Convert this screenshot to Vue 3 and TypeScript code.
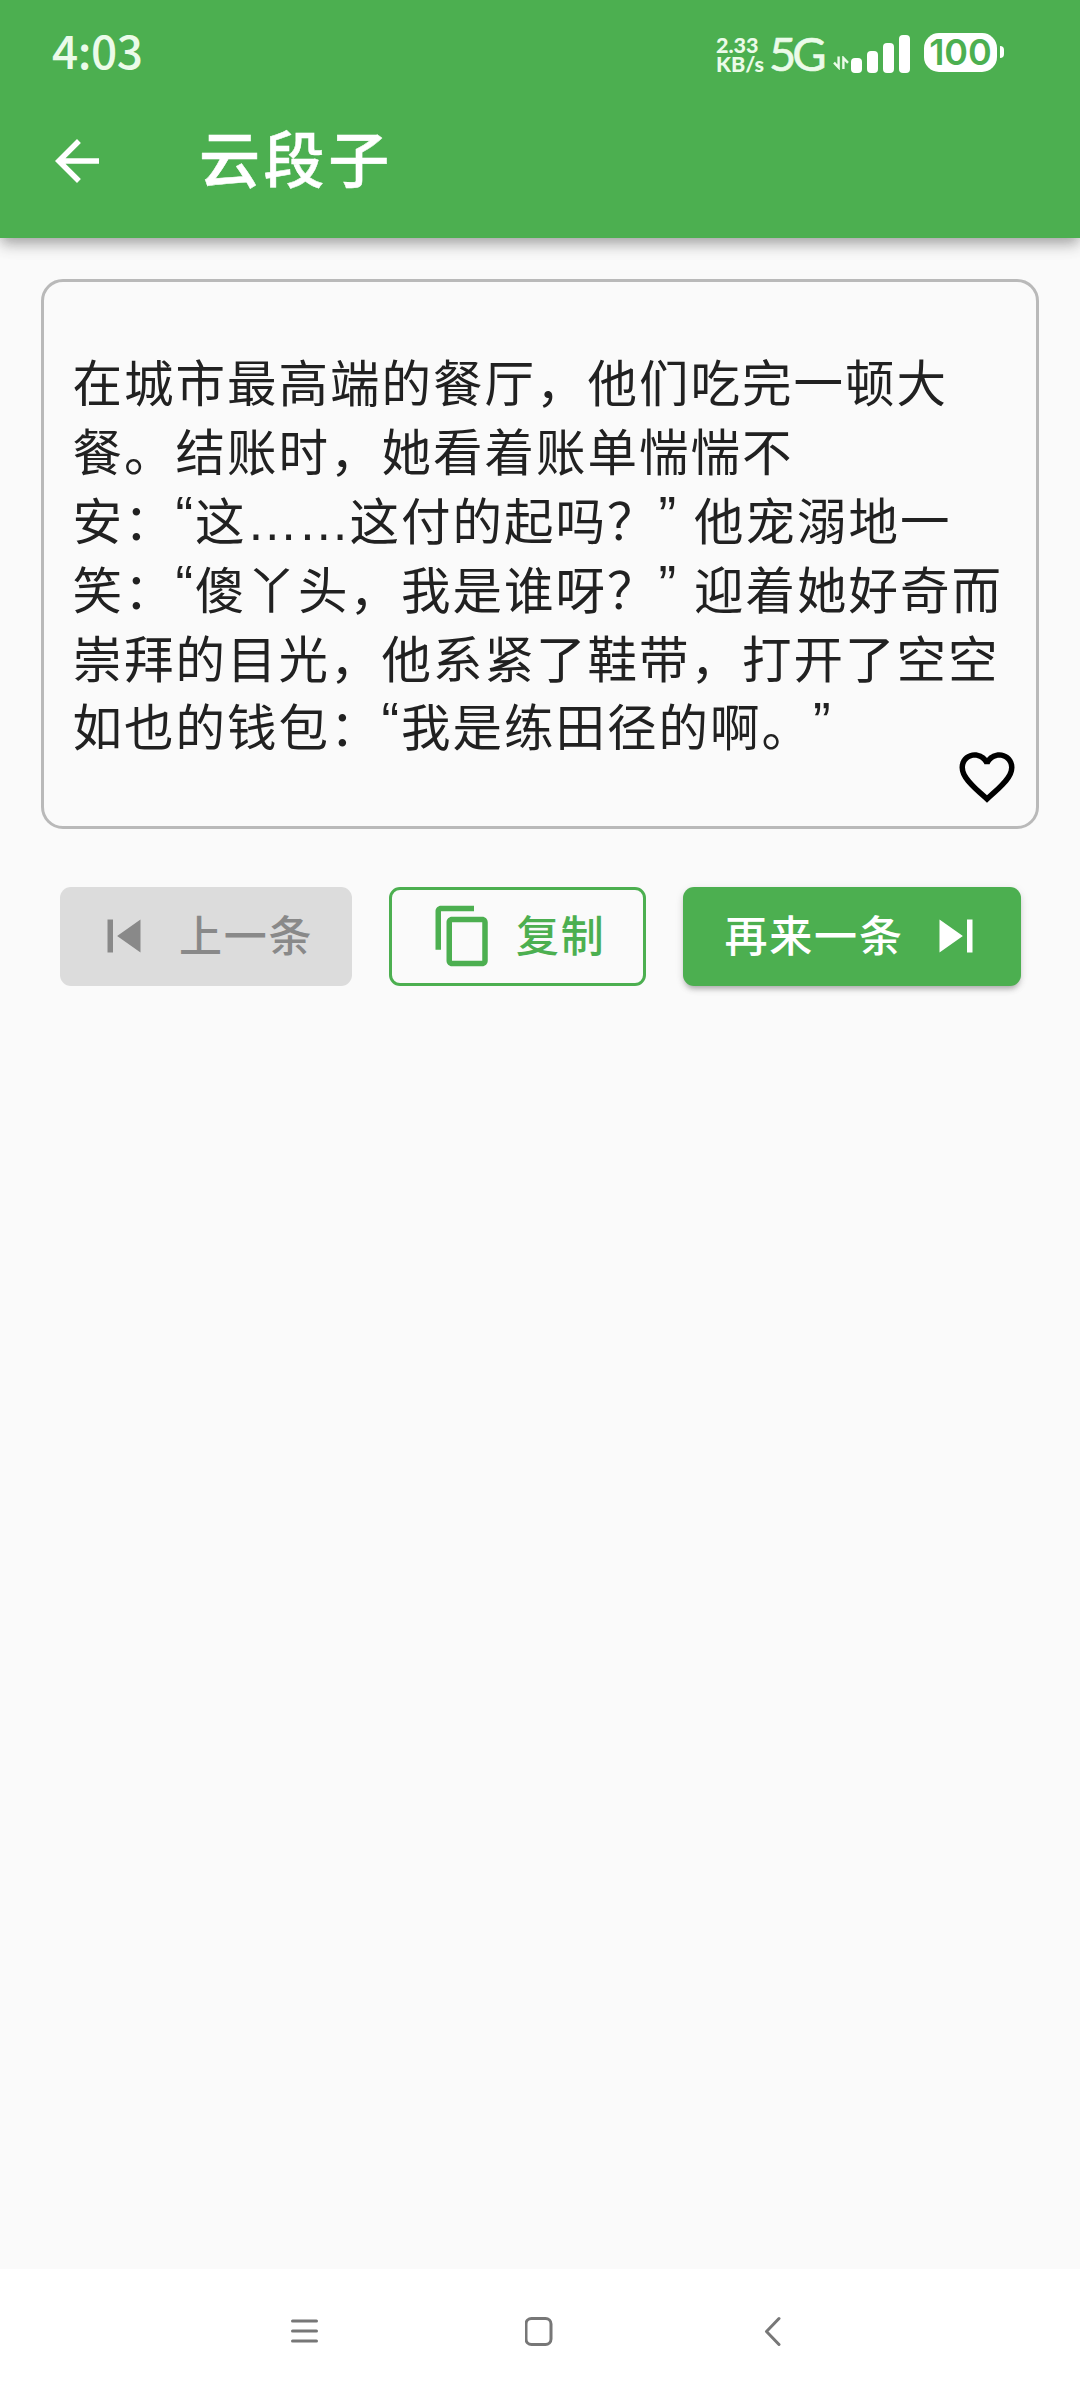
<script setup lang="ts">
interface Piece {
  text: string
  kind?: 'quote' | 'gap' | 'dots'
}

const title = '云段子'
const lines: string[] = [
  '在城市最高端的餐厅，他们吃完一顿大',
  '餐。结账时，她看着账单惴惴不',
  '安：“这……这付的起吗？” 他宠溺地一',
  '笑：“傻丫头，我是谁呀？” 迎着她好奇而',
  '崇拜的目光，他系紧了鞋带，打开了空空',
  '如也的钱包：“我是练田径的啊。”',
]

// Curly quotes, spaces and ellipses need their own advance widths.
function split(line: string): Piece[] {
  return line
    .split(/([“” ]|…+)/)
    .filter((part) => part.length > 0)
    .map((part) => {
      if (part === '“' || part === '”') return { text: part, kind: 'quote' as const }
      if (part === ' ') return { text: part, kind: 'gap' as const }
      if (part.startsWith('…')) return { text: part, kind: 'dots' as const }
      return { text: part }
    })
}

const joke: Piece[][] = lines.map(split)
const signal: number[] = [15, 22, 30, 38]
</script>

<template>
  <div class="screen">
    <header class="top">
      <div class="status">
        <span class="clock">4:03</span>
        <div class="indicators">
          <div class="speed"><span>2.33</span><span>KB/s</span></div>
          <span class="net">5G</span>
          <svg class="traffic" width="16" height="14" viewBox="0 0 16 14">
            <path d="M5.6 0.5V11.5L1 6.6M10.4 13V2L15 6.9" fill="none" stroke="currentColor" stroke-width="2.4" />
          </svg>
          <div class="bars">
            <i v-for="h in signal" :key="h" :style="{ height: h + 'px' }"></i>
          </div>
          <div class="battery"><span>100</span></div>
          <i class="nub"></i>
        </div>
      </div>
      <div class="appbar">
        <svg class="icon" viewBox="0 0 24 24"><path d="M20 11H7.83l5.59-5.59L12 4l-8 8 8 8 1.41-1.41L7.83 13H20v-2z" /></svg>
        <h1>{{ title }}</h1>
      </div>
    </header>

    <main class="content">
      <section class="card">
        <p v-for="(line, i) in joke" :key="i" class="line"><span v-for="(piece, j) in line" :key="j" :class="piece.kind">{{ piece.text }}</span></p>
        <svg class="icon heart" viewBox="0 0 24 24"><path d="M16.5 3c-1.74 0-3.41.81-4.5 2.09C10.91 3.81 9.24 3 7.5 3 4.42 3 2 5.42 2 8.5c0 3.78 3.4 6.86 8.55 11.54L12 21.35l1.45-1.32C18.6 15.36 22 12.28 22 8.5 22 5.42 19.58 3 16.5 3zm-4.4 15.55l-.1.1-.1-.1C7.14 14.24 4 11.39 4 8.5 4 6.5 5.5 5 7.5 5c1.54 0 3.04.99 3.57 2.36h1.87C13.46 5.99 14.96 5 16.5 5c2 0 3.5 1.5 3.5 3.5 0 2.89-3.14 5.74-7.9 10.05z" /></svg>
      </section>

      <div class="actions">
        <button class="btn prev" disabled>
          <svg class="icon" viewBox="0 0 24 24"><path d="M6 6h2v12H6zm3.5 6l8.5 6V6z" /></svg>
          <span>上一条</span>
        </button>
        <button class="btn copy">
          <svg class="icon" viewBox="0 0 24 24"><path d="M16 1H4c-1.100 0-2 .9-2 2v14h2V3h12V1zm3 4H8c-1.100 0-2 .9-2 2v14c0 1.100.9 2 2 2h11c1.100 0 2-.9 2-2V7c0-1.100-.9-2-2-2zm0 16H8V7h11v14z" /></svg>
          <span>复制</span>
        </button>
        <button class="btn next">
          <span>再来一条</span>
          <svg class="icon" viewBox="0 0 24 24"><path d="M6 18l8.500-6L6 6v12zM16 6v12h2V6h-2z" /></svg>
        </button>
      </div>
    </main>

    <nav class="sysnav">
      <svg width="28" height="30" viewBox="0 0 28 30"><path d="M2.500 5h24M2.500 15h24M2.500 25h24" /></svg>
      <svg width="28" height="30" viewBox="0 0 28 30"><rect x="1" y="2.500" width="25" height="26" rx="5.500" /></svg>
      <svg width="28" height="30" viewBox="0 0 28 30"><path d="M20 2.500L7.500 15.500L20 28.500" /></svg>
    </nav>
  </div>
</template>

<style>
body {
  margin: 0;
}
</style>

<style scoped>
.screen {
  width: 1080px;
  height: 2400px;
  display: flex;
  flex-direction: column;
  background: #fafafa;
  font-family: 'Noto Sans CJK SC', sans-serif;
  overflow: hidden;
}
.icon {
  width: 66px;
  height: 66px;
  fill: currentColor;
  flex: none;
  display: block;
}
.top {
  height: 238px;
  flex: none;
  background: #4caf50;
  color: #fff;
  box-shadow: 0 5px 11px -3px rgba(0, 0, 0, 0.2), 0 9px 13px rgba(0, 0, 0, 0.14), 0 3px 20px rgba(0, 0, 0, 0.1);
}
.status {
  height: 84px;
  box-sizing: border-box;
  padding: 18px 76px 0 52px;
  display: flex;
  justify-content: space-between;
  align-items: flex-start;
  color: #ebfbe9;
}
.clock {
  font: 500 46px/62px 'Noto Sans CJK SC', sans-serif;
  letter-spacing: -0.5px;
}
.indicators {
  display: flex;
  align-items: flex-start;
}
.speed {
  width: 54px;
  display: flex;
  flex-direction: column;
  font: 900 21.500px/19px Lato, sans-serif;
  padding-top: 18px;
}
.net {
  width: 63px;
  font: 400 47px/62px Lato, sans-serif;
  letter-spacing: -4px;
  text-indent: -1px;
  -webkit-text-stroke: 0.6px currentColor;
  padding-top: 4px;
}
.traffic {
  margin: 38px 2px 0 0;
}
.bars {
  display: flex;
  gap: 5px;
  align-items: flex-end;
  height: 55px;
}
.bars i {
  width: 11px;
  border-radius: 4px;
  background: #fff;
}
.battery {
  width: 73px;
  height: 39px;
  margin: 15px 3px 0 14px;
  border-radius: 15px;
  background: #fff;
  color: #4caf50;
  text-align: center;
  font: 600 36px/38px Inter, sans-serif;
}
.nub {
  width: 4px;
  height: 12px;
  margin-top: 28px;
  border-radius: 0 4px 4px 0;
  background: #fff;
}
.appbar {
  height: 154px;
  padding-left: 44px;
  display: flex;
  align-items: center;
}
h1 {
  margin: 0 0 9px 89px;
  font-size: 61px;
  font-weight: 500;
  line-height: 80px;
  letter-spacing: 3.600px;
  -webkit-text-stroke: 0.5px currentColor;
}
.content {
  flex: 1;
  padding: 41px 41px 0;
}
.card {
  position: relative;
  height: 550px;
  box-sizing: border-box;
  border: 3px solid #b9b9b9;
  border-radius: 22px;
  padding: 64px 0 0 28.500px;
}
.line {
  margin: 0;
  height: 68.900px;
  white-space: pre;
  font-size: 49.500px;
  line-height: 69px;
  letter-spacing: 2px;
  color: #212121;
}
.quote {
  position: relative;
  top: -6px;
  display: inline-block;
  width: 19.500px;
  font-size: 53px;
  line-height: 40px;
  font-family: 'Liberation Sans', sans-serif;
  letter-spacing: 0;
}
.dots {
  font-family: 'Liberation Sans', sans-serif;
  font-size: 51.500px;
  line-height: 40px;
  letter-spacing: 0;
}
.gap {
  display: inline-block;
  width: 16px;
}
.heart {
  position: absolute;
  right: 16.500px;
  bottom: 16px;
  color: #000;
}
.actions {
  margin: 58px 18px 0 19px;
  display: flex;
  justify-content: space-between;
}
.btn {
  height: 99px;
  box-sizing: border-box;
  border: 0;
  border-radius: 11px;
  padding: 0;
  display: flex;
  align-items: center;
  font: 500 43px/60px 'Noto Sans CJK SC', sans-serif;
  letter-spacing: 1.800px;
  white-space: nowrap;
}
.btn span {
  margin-bottom: 7px;
}
.btn .icon {
  margin-bottom: 1px;
}
.prev {
  width: 292px;
  padding-left: 31px;
  gap: 22px;
  background: #dcdcdc;
  color: #898989;
}
.copy {
  width: 257px;
  padding-left: 38px;
  gap: 20px;
  border: 3px solid #4caf50;
  background: transparent;
  color: #4caf50;
}
.next {
  width: 338px;
  padding-left: 41.500px;
  gap: 19.500px;
  background: #4caf50;
  color: #fff;
  box-shadow: 0 5px 5px -3px rgba(0, 0, 0, 0.2), 0 4px 6px rgba(0, 0, 0, 0.1), 0 2px 10px rgba(0, 0, 0, 0.08);
}
.sysnav {
  height: 131px;
  flex: none;
  box-sizing: border-box;
  padding: 47px 293px 0 290px;
  display: flex;
  justify-content: space-between;
  align-items: flex-start;
  background: #fff;
}
.sysnav svg {
  fill: none;
  stroke: #777;
  stroke-width: 3;
  stroke-linecap: round;
  stroke-linejoin: round;
}
</style>
